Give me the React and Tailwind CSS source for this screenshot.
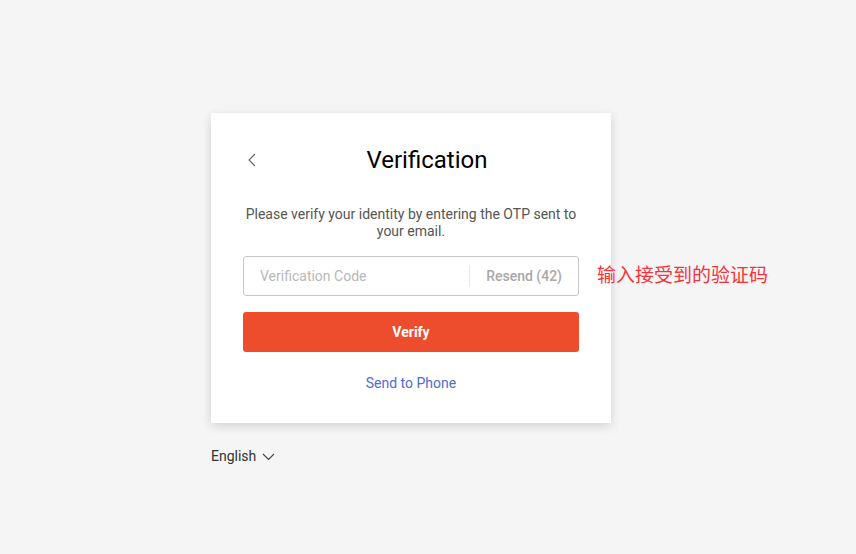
import React, { useState } from "react";

const App = () => {
    const [code, setCode] = useState("");

    return (
        <div
            className="relative min-h-[554px] w-full bg-[#f5f5f5] pl-[211px] pt-[113px]"
            style={{ fontFamily: "Roboto, 'Liberation Sans', sans-serif" }}
        >
            <div className="w-[400px] bg-white px-8 pb-[31px] pt-8 shadow-[0_3px_10px_rgba(0,0,0,0.14)]">
                <div className="flex h-[30px] items-center">
                    <button className="flex h-[30px] w-8 items-center justify-start pl-1 text-[#555]">
                        <svg width="9" height="14" viewBox="0 0 9 14" fill="none">
                            <path d="M8 1L2 7l6 6" stroke="#666" strokeWidth="1.1" />
                        </svg>
                    </button>
                    <h2 className="flex-1 text-center text-[24px] leading-[30px] font-normal text-black">
                        Verification
                    </h2>
                </div>

                <p className="mt-[31px] text-center text-[14px] leading-[17px] text-[#555]">
                    Please verify your identity by entering the OTP sent to your email.
                </p>

                <div className="mt-[16px] flex h-10 items-center rounded-[3px] border border-[#c8c8c8]">
                    <input
                        value={code}
                        onChange={(e) => setCode(e.target.value)}
                        placeholder="Verification Code"
                        className="h-full min-w-0 flex-1 bg-transparent pl-4 text-[14px] text-[#333] placeholder-[#b8b8b8] outline-none"
                    />
                    <div className="h-[22px] w-px bg-[#e8e8e8]" />
                    <span className="px-4 text-[14px] font-medium text-[#a8a8a8]">Resend (42)</span>
                </div>

                <button className="mt-4 h-10 w-full rounded-[3px] bg-[#ee4d2d] text-[14px] font-bold text-white">
                    Verify
                </button>

                <div className="mt-[23px] text-center text-[14px] leading-[17px] text-[#4f6bd6]">
                    Send to Phone
                </div>
            </div>

            <div className="mt-[25px] flex items-center gap-[6px] text-[14px] leading-[17px] text-[#333]">
                English
                <svg width="13" height="8" viewBox="0 0 13 8" fill="none">
                    <path d="M1 1l5.5 5.5L12 1" stroke="#444" strokeWidth="1.1" />
                </svg>
            </div>

            <div
                className="absolute left-[597px] top-[261px] text-[19px] leading-[26px] text-[#f5333a]"
                style={{ fontFamily: "'Noto Sans CJK SC', sans-serif" }}
            >
                输入接受到的验证码
            </div>
        </div>
    );
};

export default App;
